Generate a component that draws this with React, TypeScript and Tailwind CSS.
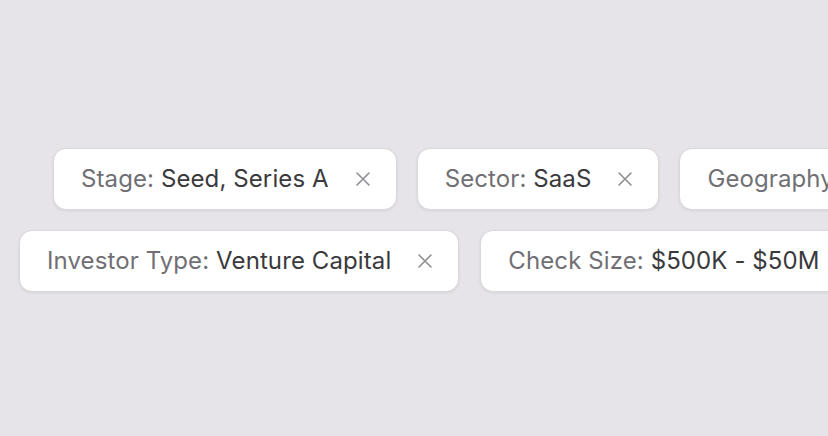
import React from 'react';

type Chip = { label: string; value: string };

const rowOne: Chip[] = [
  { label: 'Stage:', value: 'Seed, Series A' },
  { label: 'Sector:', value: 'SaaS' },
  { label: 'Geography:', value: 'North America' },
];

const rowTwo: Chip[] = [
  { label: 'Investor Type:', value: 'Venture Capital' },
  { label: 'Check Size:', value: '$500K - $50M' },
];

function FilterChip({ chip }: { chip: Chip }) {
  return (
    <div className="flex h-[62px] shrink-0 items-center gap-[26px] rounded-[13px] border border-[#d9d8dc] bg-white pl-[27px] pr-[25px] shadow-[0_1px_3px_rgba(0,0,0,0.08)]">
      <span className="whitespace-nowrap text-[24px] tracking-[0.1px]">
        <span className="text-[#707074]">{chip.label} </span>
        <span className="text-[#3a3a3d]">{chip.value}</span>
      </span>
      <svg width="16" height="16" viewBox="0 0 16 16" className="shrink-0">
        <path d="M2 2 L14 14 M14 2 L2 14" stroke="#8e8e93" strokeWidth="1.6" strokeLinecap="round" />
      </svg>
    </div>
  );
}

export default function App() {
  return (
    <div
      className="flex h-[436px] w-[828px] flex-col justify-center gap-[20px] overflow-hidden bg-[#e6e4e8] pt-[4px]"
      style={{ fontFamily: 'Inter, "Noto Sans", sans-serif' }}
    >
      <div className="flex gap-[20px] pl-[53px]">
        {rowOne.map((c, i) => (
          <FilterChip key={i} chip={c} />
        ))}
      </div>
      <div className="flex gap-[21px] pl-[19px]">
        {rowTwo.map((c, i) => (
          <FilterChip key={i} chip={c} />
        ))}
      </div>
    </div>
  );
}
